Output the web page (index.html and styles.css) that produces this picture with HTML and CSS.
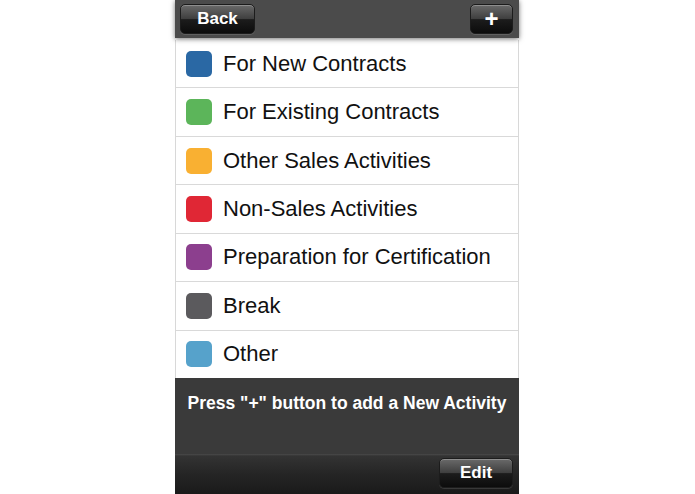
FILE: index.html
```html
<!DOCTYPE html>
<html>
<head>
<meta charset="utf-8">
<link rel="stylesheet" href="styles.css">
</head>
<body>
<div class="screen">
  <header class="navbar">
    <button class="btn btn-back">Back</button>
    <button class="btn btn-plus">+</button>
  </header>
  <ul class="list">
    <li class="row"><span class="swatch c-blue"></span><span class="label">For New Contracts</span></li>
    <li class="row"><span class="swatch c-green"></span><span class="label">For Existing Contracts</span></li>
    <li class="row"><span class="swatch c-orange"></span><span class="label">Other Sales Activities</span></li>
    <li class="row"><span class="swatch c-red"></span><span class="label">Non-Sales Activities</span></li>
    <li class="row"><span class="swatch c-purple"></span><span class="label">Preparation for Certification</span></li>
    <li class="row"><span class="swatch c-gray"></span><span class="label">Break</span></li>
    <li class="row"><span class="swatch c-lightblue"></span><span class="label">Other</span></li>
  </ul>
  <div class="message">Press "+" button to add a New Activity</div>
  <footer class="toolbar">
    <button class="btn btn-edit">Edit</button>
  </footer>
</div>
</body>
</html>
```
FILE: styles.css
```css
* { box-sizing: border-box; }
html, body { margin: 0; padding: 0; background: #fff; }
body { font-family: "Liberation Sans", Arial, Helvetica, sans-serif; }
.screen {
  width: 344px;
  height: 494px;
  margin: 0 0 0 175px;
  display: flex;
  flex-direction: column;
}
.navbar {
  height: 38px;
  flex: none;
  background: #4b4b4b;
  display: flex;
  justify-content: space-between;
  align-items: flex-start;
  padding: 4px 6px 0 5px;
  position: relative;
  z-index: 2;
  box-shadow: 0 1px 5px rgba(0,0,0,0.55);
}
.btn {
  border: 1px solid #1c1c1c;
  border-radius: 5px;
  color: #fff;
  font-family: "Liberation Sans", Arial, sans-serif;
  font-weight: bold;
  font-size: 17px;
  padding: 0;
  height: 30px;
  background: linear-gradient(#6a6a6a 0%, #3e3e3e 50%, #1c1c1c 52%, #0c0c0c 100%);
  box-shadow: inset 0 1px 0 rgba(255,255,255,0.25), 0 1px 0 rgba(255,255,255,0.12);
}
.btn-back { width: 75px; }
.btn-plus { width: 43px; font-size: 24px; line-height: 26px; }
.list {
  list-style: none;
  margin: 2px 0 0 0;
  padding: 0;
  height: 338px;
  flex: none;
  display: flex;
  flex-direction: column;
  border-left: 1px solid #d8d8d8;
  border-right: 1px solid #d8d8d8;
}
.row {
  flex: 1;
  display: flex;
  align-items: center;
  border-bottom: 1px solid #d9d9d9;
  padding-left: 10px;
}
.row:last-child { border-bottom: none; }
.swatch {
  width: 26px;
  height: 26px;
  border-radius: 5px;
  flex: none;
  margin-right: 11px;
}
.label { font-size: 22px; color: #111; }
.c-blue { background: #2a68a4; }
.c-green { background: #5cb55a; }
.c-orange { background: #f9b032; }
.c-red { background: #e02735; }
.c-purple { background: #8c3f8e; }
.c-gray { background: #5b5a5d; }
.c-lightblue { background: #56a2cb; }
.message {
  height: 76px;
  flex: none;
  background: #3a3a3a;
  color: #fff;
  font-weight: bold;
  font-size: 17.5px;
  text-align: center;
  padding-top: 15px;
}
.toolbar {
  flex: 1;
  background: linear-gradient(#4a4a4a 0px, #333 2px, #252525 50%, #1a1a1a 100%);
  display: flex;
  justify-content: flex-end;
  align-items: flex-start;
  padding: 4px 6px 0 0;
}
.btn-edit { width: 74px; }
```
